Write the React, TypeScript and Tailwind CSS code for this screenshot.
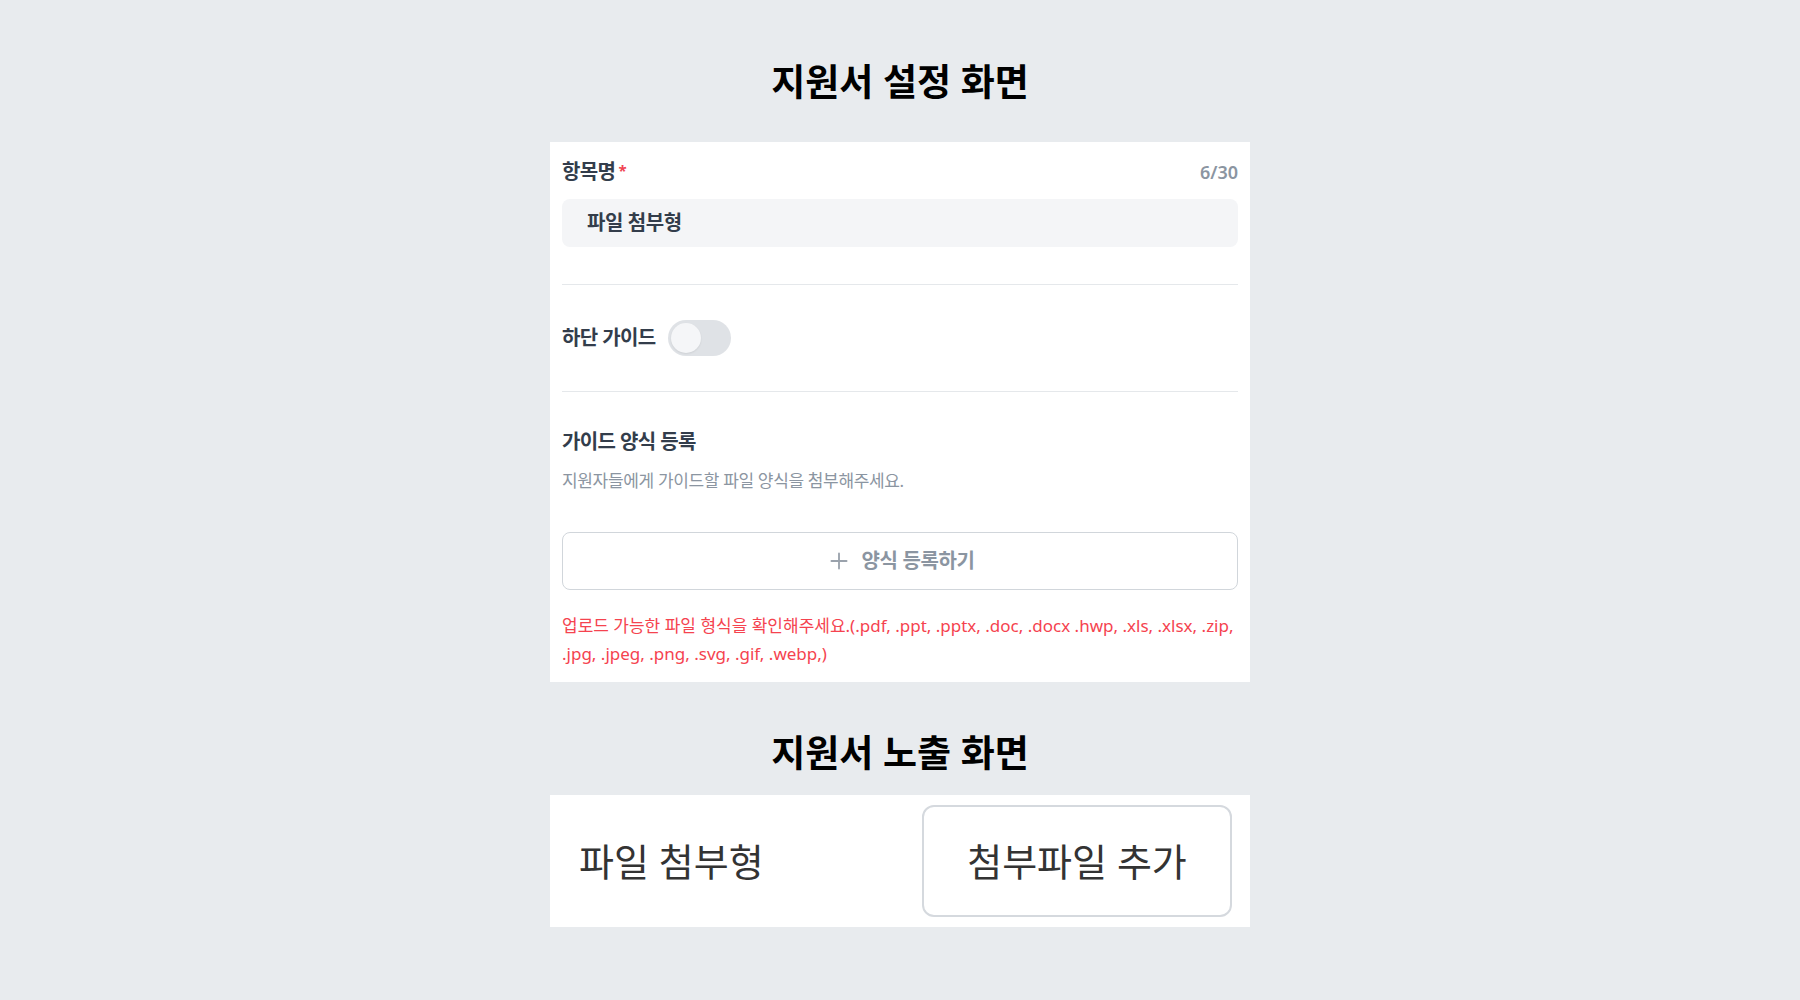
import React from "react";
import { Plus } from "lucide-react";

const FONT = { fontFamily: '"Noto Sans", "Noto Sans CJK KR", sans-serif' };

export default function App() {
  return (
    <div
      className="min-h-[1000px] w-full bg-[#e8ebee] pt-[60px] pb-[60px]"
      style={FONT}
    >
      <div className="mx-auto flex w-[700px] flex-col">
        <h1 className="flex h-[44px] items-center justify-center text-[37px] font-bold leading-[44px] text-black">
          지원서 설정 화면
        </h1>

        <div className="mt-[38px] bg-white px-[12px] pt-[17px] pb-[14px]">
          <div className="flex h-[26px] items-center justify-between">
            <div className="flex items-start text-[20px] font-bold leading-[26px] tracking-[-0.03em] text-[#333d4b]">
              항목명
              <span className="ml-[3px] mt-[1px] text-[15px] leading-[20px] text-[#f04452]">*</span>
            </div>
            <div className="text-[18px] font-semibold text-[#8b95a1]">6/30</div>
          </div>

          <div className="mt-[14px] flex h-[48px] items-center rounded-[8px] bg-[#f4f5f7] px-[25px] text-[20px] font-semibold tracking-[-0.02em] text-[#333d4b]">
            파일 첨부형
          </div>

          <div className="mt-[37px] h-px bg-[#e5e8eb]" />

          <div className="flex items-center gap-[12px] py-[35px]">
            <span className="text-[20px] font-bold leading-[26px] tracking-[-0.03em] text-[#333d4b]">
              하단 가이드
            </span>
            <div className="relative h-[36px] w-[63px] rounded-full bg-[#dfe2e6]">
              <div className="absolute left-[3px] top-[3px] h-[30px] w-[30px] rounded-full bg-[#f5f6f8] shadow-[0_1px_2px_rgba(0,0,0,0.08)]" />
            </div>
          </div>

          <div className="h-px bg-[#e5e8eb]" />

          <div className="pt-[37px]">
            <div className="text-[20px] font-bold leading-[26px] tracking-[-0.03em] text-[#333d4b]">
              가이드 양식 등록
            </div>
            <div className="mt-[15px] text-[17px] leading-[22px] tracking-[-0.02em] text-[#8b95a1]">
              지원자들에게 가이드할 파일 양식을 첨부해주세요.
            </div>

            <button className="mt-[40px] flex h-[58px] w-full items-center justify-center gap-[10px] rounded-[8px] border border-[#d1d6db] bg-white text-[20px] font-semibold tracking-[-0.02em] text-[#8b95a1]">
              <Plus size={26} strokeWidth={1.7} className="text-[#9aa2ac]" />
              <span>양식 등록하기</span>
            </button>

            <div className="mt-[22px] text-[17px] leading-[28px] text-[#f5434f]">
              <div className="whitespace-nowrap">
                업로드 가능한 파일 형식을 확인해주세요.(.pdf, .ppt, .pptx, .doc, .docx .hwp, .xls, .xlsx, .zip,
              </div>
              <div className="whitespace-nowrap">.jpg, .jpeg, .png, .svg, .gif, .webp,)</div>
            </div>
          </div>
        </div>

        <h2 className="mt-[49px] flex h-[44px] items-center justify-center text-[37px] font-bold leading-[44px] text-black">
          지원서 노출 화면
        </h2>

        <div className="mt-[20px] flex h-[132px] items-center justify-between bg-white pl-[29px] pr-[18px]">
          <span className="text-[38px] leading-[44px] text-[#333333]">파일 첨부형</span>
          <button className="flex h-[112px] w-[310px] items-center justify-center rounded-[12px] border-2 border-[#d5d9de] bg-white text-[38px] leading-[44px] text-[#333333]">
            첨부파일 추가
          </button>
        </div>
      </div>
    </div>
  );
}
